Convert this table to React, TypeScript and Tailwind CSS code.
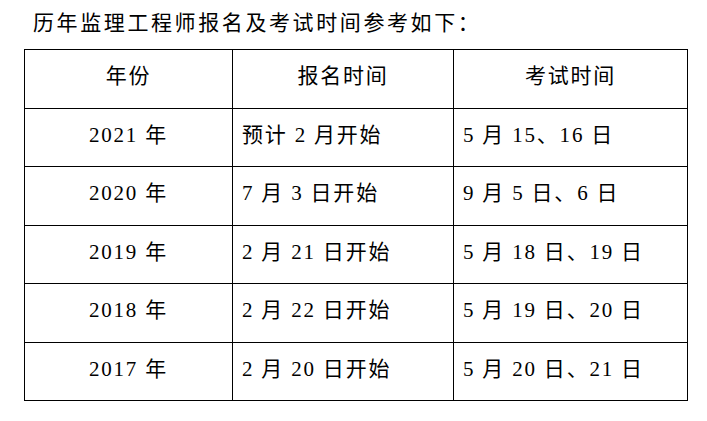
const rows = [
  { year: '2021 年', signup: '预计 2 月开始', exam: '5 月 15、16 日' },
  { year: '2020 年', signup: '7 月 3 日开始', exam: '9 月 5 日、6 日' },
  { year: '2019 年', signup: '2 月 21 日开始', exam: '5 月 18 日、19 日' },
  { year: '2018 年', signup: '2 月 22 日开始', exam: '5 月 19 日、20 日' },
  { year: '2017 年', signup: '2 月 20 日开始', exam: '5 月 20 日、21 日' },
];

const cell = 'h-[58.5px] border-r border-b border-black pt-[13px] leading-[26px]';

export default function App() {
  return (
    <div
      className="w-[707px] h-[421px] bg-white text-[21px] tracking-[1.8px] text-black"
      style={{ fontFamily: '"Liberation Serif", "Noto Sans CJK SC", serif' }}
    >
      {/* 标题 */}
      <p className="pl-[33px] pt-[10px] leading-[26px] tracking-[2.6px]">历年监理工程师报名及考试时间参考如下：</p>

      {/* 表格 */}
      <div className="ml-[24px] mt-[13px] grid w-[664px] grid-cols-[208px_221px_234px] border-l border-t border-black">
        <div className={`${cell} text-center`}>年份</div>
        <div className={`${cell} text-center`}>报名时间</div>
        <div className={`${cell} text-center`}>考试时间</div>
        {rows.map((row) => (
          <div key={row.year} className="contents">
            <div className={`${cell} text-center`}>{row.year}</div>
            <div className={`${cell} pl-[9px]`}>{row.signup}</div>
            <div className={`${cell} pl-[9px]`}>{row.exam}</div>
          </div>
        ))}
      </div>
    </div>
  );
}
